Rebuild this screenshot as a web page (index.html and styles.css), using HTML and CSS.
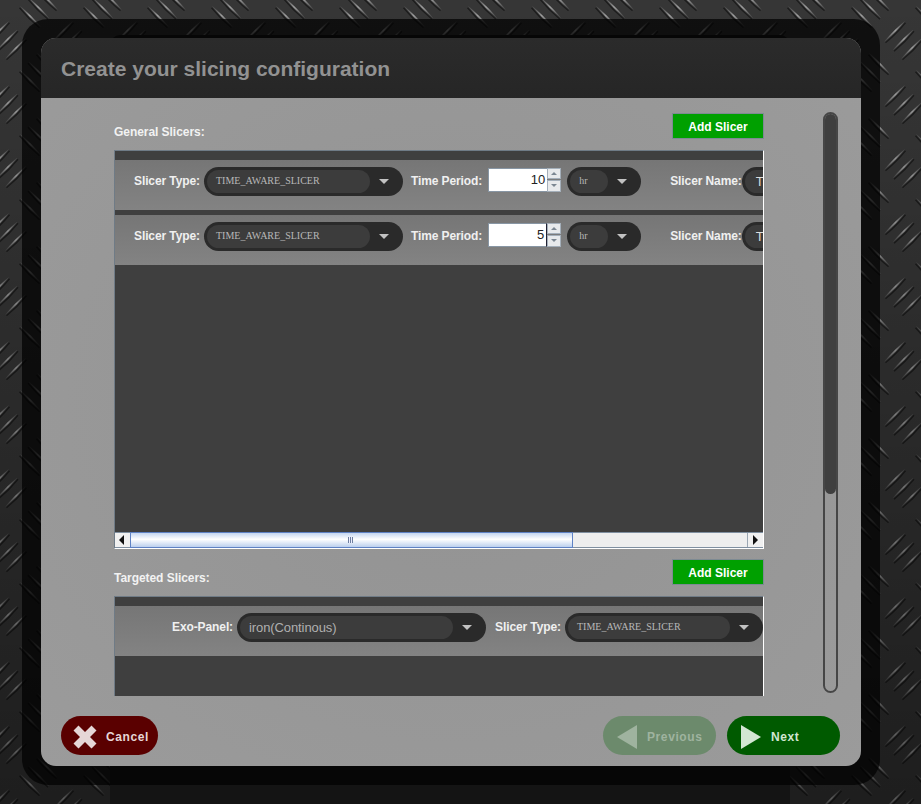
FILE: index.html
```html
<!DOCTYPE html>
<html lang="en">
<head>
    <meta charset="UTF-8">
    <meta name="viewport" content="width=device-width, initial-scale=1.0">
    <title>Create your slicing configuration</title>
    <link rel="stylesheet" href="styles.css">
</head>
<body>
    <svg class="plate" width="921" height="804" aria-hidden="true">
        <defs>
            <linearGradient id="dashUp" x1="0" y1="1" x2="1" y2="0">
                <stop offset="0" stop-color="#444"/>
                <stop offset="0.55" stop-color="#a0a0a0"/>
                <stop offset="1" stop-color="#4a4a4a"/>
            </linearGradient>
            <linearGradient id="shade" x1="0" y1="0" x2="0" y2="1">
                <stop offset="0" stop-color="#000" stop-opacity="0"/>
                <stop offset="1" stop-color="#000" stop-opacity="0.45"/>
            </linearGradient>
            <g id="dash">
                <path d="M-10 10 Q1 1 10 -10" fill="none" stroke="#1c1c1c" stroke-width="1.4" transform="translate(1 1.2)"/>
                <path d="M-10 10 Q-1 -1 10 -10 Q1 1 -10 10Z" fill="url(#dashUp)" stroke="url(#dashUp)" stroke-width="0.4"/>
            </g>
            <g id="group">
                <use href="#dash" x="-8.500" y="-8.500"/>
                <use href="#dash"/>
                <use href="#dash" x="8.500" y="8.500"/>
            </g>
            <pattern id="tread" width="64" height="64" patternUnits="userSpaceOnUse">
                <rect width="64" height="64" fill="#363636"/>
                <use href="#group" x="7" y="40"/>
                <use href="#group" x="71" y="40"/>
                <use href="#group" transform="translate(39 8) scale(-1 1)"/>
                <use href="#group" transform="translate(39 72) scale(-1 1)"/>
            </pattern>
        </defs>
        <rect width="921" height="804" fill="url(#tread)"/>
        <rect width="921" height="804" fill="url(#shade)"/>
    </svg>
    <div class="backing"></div>

    <div class="frame">
        <div class="dialog">
            <div class="dialog-header">
                <h1>Create your slicing configuration</h1>
            </div>

            <div class="dialog-main">
                <div class="sections">
                    <div class="section-head">
                        <label>General Slicers:</label>
                        <button class="add-btn">Add Slicer</button>
                    </div>
                    <div class="slicer-box general">
                        <div class="slicer-view">
                            <div class="slicer-row">
                                <span class="field-label">Slicer Type:</span>
                                <div class="combo type"><span class="combo-value serif">TIME_AWARE_SLICER</span><span class="combo-arrow"></span></div>
                                <span class="field-label period">Time Period:</span>
                                <div class="spinner">
                                    <span class="spin-value">10</span>
                                    <div class="spin-btns"><span class="spin-up"></span><span class="spin-down"></span></div>
                                </div>
                                <div class="combo unit"><span class="combo-value serif">hr</span><span class="combo-arrow"></span></div>
                                <span class="field-label name">Slicer Name:</span>
                                <div class="combo slicer-name"><span class="combo-value">T</span></div>
                            </div>
                            <div class="slicer-row">
                                <span class="field-label">Slicer Type:</span>
                                <div class="combo type"><span class="combo-value serif">TIME_AWARE_SLICER</span><span class="combo-arrow"></span></div>
                                <span class="field-label period">Time Period:</span>
                                <div class="spinner">
                                    <span class="spin-value caret">5</span>
                                    <div class="spin-btns"><span class="spin-up"></span><span class="spin-down"></span></div>
                                </div>
                                <div class="combo unit"><span class="combo-value serif">hr</span><span class="combo-arrow"></span></div>
                                <span class="field-label name">Slicer Name:</span>
                                <div class="combo slicer-name"><span class="combo-value">T</span></div>
                            </div>
                        </div>
                        <div class="hscroll">
                            <span class="hscroll-btn"><i class="tri-left"></i></span>
                            <span class="hscroll-thumb"><i class="grip"></i></span>
                            <span class="hscroll-track"></span>
                            <span class="hscroll-btn right"><i class="tri-right"></i></span>
                        </div>
                    </div>

                    <div class="section-head second">
                        <label>Targeted Slicers:</label>
                        <button class="add-btn">Add Slicer</button>
                    </div>
                    <div class="slicer-box targeted">
                        <div class="slicer-view">
                            <div class="slicer-row exo">
                                <span class="field-label">Exo-Panel:</span>
                                <div class="combo panel"><span class="combo-value">iron(Continous)</span><span class="combo-arrow"></span></div>
                                <span class="field-label period">Slicer Type:</span>
                                <div class="combo type-short"><span class="combo-value serif">TIME_AWARE_SLICER</span><span class="combo-arrow"></span></div>
                            </div>
                        </div>
                    </div>
                </div>

                <div class="vscroll"><div class="vscroll-thumb"></div></div>
            </div>

            <div class="dialog-footer">
                <button class="nav-btn cancel">
                    <svg width="24" height="24" viewBox="0 0 24 24"><path d="M5.500.5 12 7 18.500.5 23.500 5.500 17 12l6.500 6.500-5 5L12 17l-6.500 6.500-5-5L7 12 .5 5.500Z" fill="#e6d6d6"/></svg>
                    Cancel
                </button>
                <span class="footer-gap"></span>
                <button class="nav-btn previous">
                    <svg width="20" height="24" viewBox="0 0 20 24"><path d="M20 0V24L0 12Z" fill="#9fb39f"/></svg>
                    Previous
                </button>
                <button class="nav-btn next">
                    <svg width="20" height="24" viewBox="0 0 20 24"><path d="M0 0V24L20 12Z" fill="#d2e6d2"/></svg>
                    Next
                </button>
            </div>
        </div>
    </div>
</body>
</html>
```

FILE: styles.css
```css
html, body {
    margin: 0;
    padding: 0;
    height: 804px;
    overflow: hidden;
}
body {
    font-family: "Liberation Sans", Arial, sans-serif;
    background-color: #2f2f2f;
    position: relative;
    box-sizing: border-box;
    padding: 19px 41px 0 22px;
}
.plate {
    position: absolute;
    top: 0;
    left: 0;
}
.backing {
    position: absolute;
    top: 35px;
    left: 110px;
    width: 680px;
    height: 769px;
    background-color: #141414;
    border-radius: 10px 10px 0 0;
}
.frame {
    position: relative;
    box-sizing: border-box;
    width: 858px;
    height: 766px;
    padding: 19px;
    background-color: rgba(0, 0, 0, 0.7);
    border-radius: 26px;
}
.dialog {
    display: flex;
    flex-direction: column;
    width: 820px;
    height: 728px;
    border-radius: 15px;
    overflow: hidden;
    background: radial-gradient(ellipse at center, #929292, #9b9b9b);
}
.dialog-header {
    height: 60px;
    flex: none;
    display: flex;
    align-items: center;
    padding: 1px 0 0 20px;
    box-sizing: border-box;
    background: linear-gradient(#2b2b2b, #262626);
}
.dialog-header h1 {
    margin: 0;
    font-size: 21px;
    font-weight: bold;
    color: #929292;
}

/* content + page scrollbar */
.dialog-main {
    display: flex;
    height: 598px;
    flex: none;
}
.sections {
    box-sizing: border-box;
    width: 723px;
    height: 598px;
    padding: 15px 0 0 73px;
    overflow: hidden;
}
.section-head {
    display: flex;
    justify-content: space-between;
    align-items: flex-end;
    width: 650px;
    height: 26px;
    margin-bottom: 11px;
}
.section-head.second {
    margin-top: 10px;
}
.section-head label {
    font-size: 12px;
    font-weight: bold;
    color: #f2f2f2;
    line-height: 14px;
    letter-spacing: -0.05px;
}
.add-btn {
    box-sizing: border-box;
    width: 92px;
    height: 26px;
    padding: 1px 0 0;
    border: 1px solid #7d8a93;
    background-color: #00a000;
    color: #fff;
    font-family: inherit;
    font-size: 12px;
    font-weight: bold;
}

.slicer-box {
    box-sizing: border-box;
    width: 650px;
    display: flex;
    flex-direction: column;
    background-color: #3f3f3f;
    border-top: 1px solid #6f7b86;
    border-left: 1px solid #6f7b86;
    border-right: 1px solid #fff;
}
.slicer-box.general {
    height: 399px;
    border-bottom: 1px solid #fff;
}
.slicer-box.targeted {
    height: 120px;
}
.slicer-view {
    flex: 1;
    overflow: hidden;
    padding-top: 9px;
}
.slicer-row {
    display: flex;
    align-items: center;
    height: 50px;
    margin-bottom: 5px;
    padding: 0 0 8px 19px;
    box-sizing: border-box;
    background: linear-gradient(#767676, #838383);
}
.slicer-row.exo {
    padding-left: 57px;
}
.field-label {
    flex: none;
    font-size: 12px;
    font-weight: bold;
    letter-spacing: -0.1px;
    color: #f0f0f0;
    white-space: nowrap;
}
.field-label.period {
    margin-left: 8px;
}
.exo .field-label.period {
    margin-left: 9px;
}
.field-label.name {
    margin-left: 29px;
}

/* pill combo boxes */
.combo {
    flex: none;
    box-sizing: border-box;
    display: flex;
    align-items: center;
    height: 29px;
    margin-left: 4px;
    padding: 3px;
    background-color: #2a2a2a;
    border-radius: 15px;
}
.combo.type { width: 199px; }
.combo.unit { width: 74px; margin-left: 6px; }
.combo.panel { width: 249px; }
.combo.type-short { width: 198px; }
.combo.slicer-name { width: 120px; margin-left: 0; }
.combo-value {
    box-sizing: border-box;
    flex: 1;
    height: 23px;
    line-height: 23px;
    padding-left: 9px;
    background-color: #3c3c3c;
    border-radius: 12px;
    font-size: 13px;
    letter-spacing: -0.1px;
    color: #b0b0b0;
    white-space: nowrap;
}
.slicer-name .combo-value {
    padding-left: 11px;
    color: #ddd;
}
.combo-value.serif {
    font-family: "Liberation Serif", "Times New Roman", serif;
    font-size: 10px;
    line-height: 21px;
    letter-spacing: 0;
    color: #b8b8b8;
}
.combo-arrow {
    flex: none;
    width: 30px;
    height: 5px;
    position: relative;
}
.combo-arrow:before {
    content: "";
    position: absolute;
    left: 9px;
    top: 0;
    border-left: 5px solid transparent;
    border-right: 5px solid transparent;
    border-top: 5px solid #c2c2c2;
}

/* number spinner */
.spinner {
    flex: none;
    display: flex;
    align-items: stretch;
    width: 73px;
    height: 24px;
    margin-left: 6px;
    margin-bottom: 3px;
}
.spin-value {
    box-sizing: border-box;
    width: 59px;
    padding-right: 2px;
    background-color: #fff;
    border-top: 1px solid #8896a4;
    border-left: 1px solid #8896a4;
    border-bottom: 1px solid #8896a4;
    font-size: 13px;
    line-height: 22px;
    text-align: right;
    color: #222;
}
.spin-value.caret {
    border-right: 1px solid #223;
}
.spin-btns {
    width: 14px;
    display: flex;
    flex-direction: column;
    gap: 1px;
}
.spin-up, .spin-down {
    flex: 1;
    background-color: #e8eaec;
    border: 1px solid #a4afba;
    position: relative;
}
.spin-up:before, .spin-down:before {
    content: "";
    position: absolute;
    left: 3px;
    top: 3px;
    border-left: 3px solid transparent;
    border-right: 3px solid transparent;
}
.spin-up:before {
    border-bottom: 3px solid #7c8792;
}
.spin-down:before {
    border-top: 3px solid #7c8792;
}

/* swing style scrollbar under the table */
.hscroll {
    display: flex;
    flex: none;
    height: 16px;
    background-color: #eeeeee;
    border-top: 1px solid #7f8fa0;
    box-sizing: border-box;
    border-bottom: 1px solid #7f8fa0;
}
.hscroll-btn {
    flex: none;
    width: 15px;
    position: relative;
    background-color: #f0f0f0;
}
.hscroll-btn.right {
    border-left: 1px solid #9aa6b2;
}
.hscroll-btn i {
    position: absolute;
    top: 2px;
    border-top: 5px solid transparent;
    border-bottom: 5px solid transparent;
}
.tri-left {
    left: 4px;
    border-right: 5px solid #111;
}
.tri-right {
    left: 5px;
    border-left: 5px solid #111;
}
.hscroll-thumb {
    flex: none;
    box-sizing: border-box;
    width: 443px;
    position: relative;
    background: linear-gradient(#c4d6f0, #ffffff 45%, #bcd0ee);
    border: 1px solid #5f82c4;
    margin: -1px 0;
}
.grip {
    position: absolute;
    left: 217px;
    top: 4px;
    width: 5px;
    height: 6px;
    background: repeating-linear-gradient(90deg, #6d7fa0 0 1px, #eef 1px 2px);
}
.hscroll-track {
    flex: 1;
    background-color: #eeeeee;
}

/* page scrollbar */
.vscroll {
    box-sizing: border-box;
    width: 15px;
    height: 581px;
    margin: 14px 0 0 59px;
    border: 2px solid #464646;
    border-radius: 8px;
    overflow: hidden;
}
.vscroll-thumb {
    height: 380px;
    background-color: #3f3f3f;
    border-radius: 0 0 6px 6px;
}

/* bottom buttons */
.dialog-footer {
    display: flex;
    align-items: flex-start;
    gap: 11px;
    padding: 20px 21px 0 20px;
}
.footer-gap {
    flex: 1;
}
.nav-btn {
    box-sizing: border-box;
    display: flex;
    align-items: center;
    height: 39px;
    width: 113px;
    padding: 2px 0 0 14px;
    gap: 10px;
    border: none;
    border-radius: 20px;
    font-family: inherit;
    font-size: 12px;
    font-weight: bold;
    letter-spacing: 0.6px;
}
.nav-btn.cancel {
    width: 97px;
    padding-left: 12px;
    gap: 9px;
    background-color: #5a0000;
    color: #e6d6d6;
}
.nav-btn.previous {
    background-color: #6c8a6c;
    color: #9fb39f;
}
.nav-btn.next {
    background-color: #005a00;
    color: #d2e6d2;
}
```
